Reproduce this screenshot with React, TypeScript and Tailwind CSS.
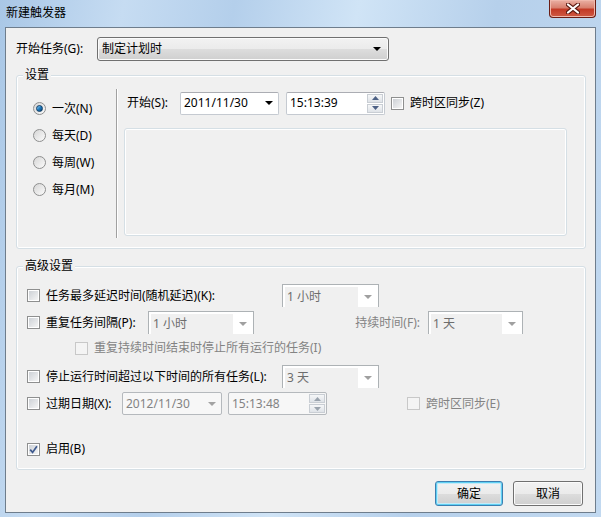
import React from "react";

const gray = "text-[#838383]";

function Check({ checked = false, disabled = false }: { checked?: boolean; disabled?: boolean }) {
  return (
    <span
      className={`flex h-[13px] w-[13px] shrink-0 items-center justify-center border ${
        disabled ? "border-[#c8c8c8] bg-[#f4f4f4]" : "border-[#8e8f8f] bg-white"
      }`}
    >
      {!disabled && (
        <span className="relative h-[9px] w-[9px] bg-gradient-to-br from-[#cdd1d6] to-[#f5f5f5]">
          {checked && (
            <svg viewBox="0 0 9 9" className="absolute left-0 top-0 h-[9px] w-[9px]">
              <path d="M1.2 4.6 L3.6 7.4 L7.9 1.2" fill="none" stroke="#3f5a8e" strokeWidth="1.7" />
            </svg>
          )}
        </span>
      )}
    </span>
  );
}

function Radio({ on = false }: { on?: boolean }) {
  return (
    <span className="flex h-[13px] w-[13px] shrink-0 items-center justify-center rounded-full border border-[#8e8f8f] bg-gradient-to-br from-[#d6d6d6] to-[#fbfbfb]">
      {on && (
        <span className="h-[7px] w-[7px] rounded-full border border-[#0d3a63] bg-gradient-to-br from-[#8fd3f6] via-[#1f7cc0] to-[#0a4273]" />
      )}
    </span>
  );
}

function Arrow({ color = "border-t-black" }: { color?: string }) {
  return <span className={`h-0 w-0 border-x-[4px] border-t-[4px] border-x-transparent ${color}`} />;
}

function Spinner({ disabled = false }: { disabled?: boolean }) {
  const tri = disabled ? "#9aa3ad" : "#4d6185";
  return (
    <div className="flex h-full w-[16px] flex-col gap-[1px] py-[1px]">
      {[0, 1].map((i) => (
        <div
          key={i}
          className="flex flex-1 items-center justify-center border border-[#c9ced4] bg-gradient-to-b from-[#f6f7f8] to-[#dfe3e8]"
        >
          <svg width="7" height="4" viewBox="0 0 7 4">
            <path d={i === 0 ? "M0 4 L3.5 0 L7 4 Z" : "M0 0 L3.5 4 L7 0 Z"} fill={tri} />
          </svg>
        </div>
      ))}
    </div>
  );
}

function DateBox({ value, width, disabled = false }: { value: string; width: string; disabled?: boolean }) {
  return (
    <div
      className={`flex h-[23px] shrink-0 items-center rounded-[2px] border pl-[3px] pr-[5px] ${width} ${
        disabled
          ? "border-[#b5b9bd] bg-[#f7f7f7] text-[#838383]"
          : "border-[#c5cad1] border-t-[#abadb3] bg-white"
      }`}
    >
      <span className="flex-1">{value}</span>
      <Arrow color={disabled ? "border-t-[#a2a2a2]" : "border-t-black"} />
    </div>
  );
}

function TimeBox({ value, width, disabled = false }: { value: string; width: string; disabled?: boolean }) {
  return (
    <div
      className={`flex h-[23px] shrink-0 items-center rounded-[2px] border pl-[3px] pr-[1px] ${width} ${
        disabled
          ? "border-[#b5b9bd] bg-[#f7f7f7] text-[#838383]"
          : "border-[#c5cad1] border-t-[#abadb3] bg-white"
      }`}
    >
      <span className="flex-1">{value}</span>
      <Spinner disabled={disabled} />
    </div>
  );
}

function DisabledCombo({ value, width }: { value: string; width: string }) {
  return (
    <div className={`flex h-[23px] shrink-0 border-x border-t border-[#adb2b5] bg-white pl-[2px] pt-[2px] ${width}`}>
      <span className="flex flex-1 items-center bg-[#f0f0f0] pl-[2px] text-[#6d6d6d]">{value}</span>
      <span className="flex w-[20px] items-center justify-center">
        <Arrow color="border-t-[#a0a0a0]" />
      </span>
    </div>
  );
}

function Group({ title, className, children }: { title: string; className: string; children: React.ReactNode }) {
  return (
    <div
      className={`relative ml-[10px] w-[570px] shrink-0 rounded-[3px] border border-[#d5dfe5] shadow-[inset_0_0_0_1px_#ffffff] ${className}`}
    >
      <span className="absolute -top-[9px] left-[6px] bg-[#f0f0f0] px-[2px]">{title}</span>
      {children}
    </div>
  );
}

function Button({ label, primary = false }: { label: string; primary?: boolean }) {
  return (
    <div
      className={`flex h-[25px] items-center justify-center rounded-[3px] border bg-[linear-gradient(#f2f2f2,#ebebeb_50%,#dddddd_50%,#cfcfcf)] ${
        primary
          ? "w-[68px] border-[#3c7fb1] shadow-[inset_0_0_0_1px_#5fd0f3,inset_0_0_0_2px_#c4eaf8]"
          : "w-[70px] border-[#707070] shadow-[inset_0_0_0_1px_#fbfbfb]"
      }`}
    >
      {label}
    </div>
  );
}

export default function App() {
  return (
    <div className="flex h-[517px] w-[601px] flex-col bg-[linear-gradient(100deg,#a9c7e6_0%,#c6dcf2_18%,#b4cfeb_34%,#d0e4f6_52%,#b6d0eb_72%,#c2d9f0_100%)] font-['Noto_Sans','Noto_Sans_CJK_SC',sans-serif] text-[12px] leading-[16px] text-black">
      <div className="flex h-[27px] shrink-0 items-start">
        <div className="pl-[6px] pt-[5px]">新建触发器</div>
        <div className="ml-auto mr-[5px] flex h-[18px] w-[47px] items-center justify-center rounded-b-[4px] border border-t-0 border-[#6b1d14] bg-[linear-gradient(#eab0a4,#d8806f_45%,#c33a26_55%,#cf5a44)] shadow-[inset_0_0_0_1px_#f0b8ac]">
          <svg width="14" height="11" viewBox="0 0 14 11">
            <path d="M2 1.5 L12 9.5 M12 1.5 L2 9.5" stroke="#5a1810" strokeWidth="4.2" strokeLinecap="round" />
            <path d="M2 1.5 L12 9.5 M12 1.5 L2 9.5" stroke="#ffffff" strokeWidth="2.2" strokeLinecap="round" />
          </svg>
        </div>
      </div>

      <div className="mx-[5px] flex h-[486px] flex-col border border-[#6e7d8c] bg-[#f0f0f0]">
        <div className="flex items-center pl-[10px] pt-[9px]">
          <span className="w-[81px]">开始任务(G):</span>
          <div className="flex h-[24px] w-[292px] items-center rounded-[3px] border border-[#707070] bg-[linear-gradient(#f2f2f2,#ebebeb_50%,#dddddd_50%,#cfcfcf)] pl-[4px] pr-[7px] shadow-[inset_0_0_0_1px_#fbfbfb]">
            <span className="flex-1">制定计划时</span>
            <Arrow />
          </div>
        </div>

        <Group title="设置" className="mt-[14px] h-[174px]">
          <div className="flex h-full">
            <div className="flex w-[99px] flex-col pl-[16px] pt-[19px]">
              {[
                ["一次(N)", true],
                ["每天(D)", false],
                ["每周(W)", false],
                ["每月(M)", false],
              ].map(([label, on]) => (
                <div key={label as string} className="flex h-[27px] items-center gap-[6px]">
                  <Radio on={on as boolean} />
                  <span>{label}</span>
                </div>
              ))}
            </div>
            <div className="mb-[10px] mt-[13px] w-[2px] border-l border-r border-l-[#a0a0a0] border-r-white" />
            <div className="flex flex-col pl-[6px] pt-[16px]">
              <div className="flex h-[22px] items-center">
                <span className="ml-[3px] w-[53px]">开始(S):</span>
                <DateBox value="2011/11/30" width="w-[99px]" />
                <div className="ml-[7px]">
                  <TimeBox value="15:13:39" width="w-[99px]" />
                </div>
                <span className="ml-[6px]">
                  <Check />
                </span>
                <span className="ml-[6px]">跨时区同步(Z)</span>
              </div>
              <div className="mt-[14px] h-[108px] w-[443px] rounded-[3px] border border-[#d5dfe5] shadow-[inset_0_0_0_1px_#ffffff]" />
            </div>
          </div>
        </Group>

        <Group title="高级设置" className="mt-[17px] h-[204px]">
          <div className="flex flex-col pl-[10px] pt-[17px]">
            <div className="flex h-[23px] items-center">
              <Check />
              <span className="ml-[6px] w-[236px]">任务最多延迟时间(随机延迟)(K):</span>
              <DisabledCombo value="1 小时" width="w-[97px]" />
            </div>
            <div className="mt-[4px] flex h-[23px] items-center">
              <Check />
              <span className="ml-[6px] w-[102px]">重复任务间隔(P):</span>
              <DisabledCombo value="1 小时" width="w-[106px]" />
              <span className={`w-[174px] pr-[8px] text-right ${gray}`}>持续时间(F):</span>
              <DisabledCombo value="1 天" width="w-[95px]" />
            </div>
            <div className="mt-[4px] flex h-[20px] items-center pl-[48px]">
              <Check disabled />
              <span className={`ml-[6px] ${gray}`}>重复持续时间结束时停止所有运行的任务(I)</span>
            </div>
            <div className="mt-[7px] flex h-[23px] items-center">
              <Check />
              <span className="ml-[6px] w-[236px]">停止运行时间超过以下时间的所有任务(L):</span>
              <DisabledCombo value="3 天" width="w-[97px]" />
            </div>
            <div className="mt-[4px] flex h-[23px] items-center">
              <Check />
              <span className="ml-[6px] w-[76px]">过期日期(X):</span>
              <DateBox value="2012/11/30" width="w-[100px]" disabled />
              <div className="ml-[6px]">
                <TimeBox value="15:13:48" width="w-[99px]" disabled />
              </div>
              <span className="ml-[80px]">
                <Check disabled />
              </span>
              <span className={`ml-[6px] ${gray}`}>跨时区同步(E)</span>
            </div>
            <div className="mt-[24px] flex h-[20px] items-center">
              <Check checked />
              <span className="ml-[6px]">启用(B)</span>
            </div>
          </div>
        </Group>

        <div className="mt-[11px] flex justify-end gap-[10px] pr-[12px]">
          <Button label="确定" primary />
          <Button label="取消" />
        </div>
      </div>
    </div>
  );
}
